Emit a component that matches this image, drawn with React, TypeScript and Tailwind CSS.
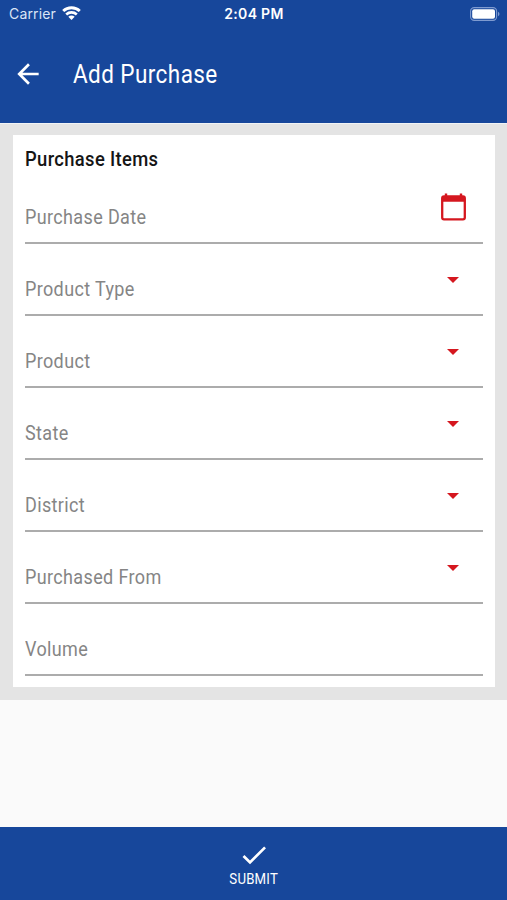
import React from "react";

type Field = { label: string; icon?: "calendar" | "caret" };

const fields: Field[] = [
  { label: "Purchase Date", icon: "calendar" },
  { label: "Product Type", icon: "caret" },
  { label: "Product", icon: "caret" },
  { label: "State", icon: "caret" },
  { label: "District", icon: "caret" },
  { label: "Purchased From", icon: "caret" },
  { label: "Volume" },
];

function StatusBar() {
  return (
    <div className="grid h-7 grid-cols-3 items-center pl-[9px] pr-[7px] font-['Inter',sans-serif] text-[14px] leading-7 text-white">
      <div className="flex items-center gap-[6px]">
        <span className="tracking-[0.15px] text-[#dbe5f6]">Carrier</span>
        <svg className="-mt-[2px]" width="19" height="14" viewBox="0 0 19 14" fill="none" stroke="white">
          <path d="M1.2 5C5.8.8 13.2.8 17.8 5" strokeWidth="3" />
          <path d="M4.2 8.4C7.2 5.7 11.8 5.7 14.8 8.4" strokeWidth="2.7" />
          <path d="M9.5 14 6.3 10.8C8.1 9.2 10.9 9.2 12.7 10.8Z" fill="white" stroke="none" />
        </svg>
      </div>
      <span className="-ml-px text-center font-semibold tracking-[0.3px]">2:04 PM</span>
      <svg className="-mt-px justify-self-end" width="30" height="14" viewBox="0 0 30 14">
        <rect x=".6" y=".6" width="26" height="12.8" rx="3.6" fill="none" stroke="#7f9bd0" strokeWidth="1.1" />
        <rect x="2.2" y="2.2" width="22.8" height="9.6" rx="2" fill="white" />
        <path d="M28 4.8c2 .8 2 3.6 0 4.4z" fill="#7f9bd0" />
      </svg>
    </div>
  );
}

function FieldRow({ label, icon }: Field) {
  return (
    <div className="flex h-[72px] items-end justify-between border-b-2 border-[#acacac] pb-[13px]">
      <span className="ml-[0.4px] origin-left scale-x-90 text-[20px] leading-6 tracking-[0.4px] text-[#858585]">{label}</span>
      {icon === "calendar" && (
        <svg className="mb-[8px] mr-[17px]" width="25" height="28" viewBox="0 0 25 28" fill="none" stroke="#d5171f">
          <rect x="1.2" y="3.4" width="22.6" height="22.9" rx="1.8" strokeWidth="2.3" />
          <path d="M1.2 8.8V5Q1.2 3 3.2 3H21.8Q23.8 3 23.8 5V8.8Z" fill="#d5171f" stroke="none" />
          <path d="M5 .4V4M20 .4V4" strokeWidth="2.4" />
        </svg>
      )}
      {icon === "caret" && (
        <svg className="mb-[18px] mr-[24px]" width="12" height="6" viewBox="0 0 12 6">
          <path d="M0 0h12L6 6z" fill="#d5171f" />
        </svg>
      )}
    </div>
  );
}

export default function App() {
  return (
    <div className="flex h-[900px] w-[507px] flex-col bg-[#fafafa] font-['Roboto',sans-serif]">
      <header className="h-[123px] bg-[#17479b]">
        <StatusBar />
        <div className="flex h-[92px] items-center pl-[12px] text-white">
          <svg width="32" height="32" viewBox="0 0 24 24" fill="currentColor">
            <path d="M20 11H7.83l5.59-5.59L12 4l-8 8 8 8 1.41-1.41L7.83 13H20v-2z" />
          </svg>
          <h1 className="ml-[29.4px] mt-px origin-left scale-x-90 text-[25px] leading-8 tracking-[0.47px]">Add Purchase</h1>
        </div>
      </header>
      <main className="h-[577px] border-t border-[#f1f3f5] bg-[#e4e4e4] pl-[13px] pr-[12px] pt-[11px]">
        <section className="h-[552px] bg-white px-3">
          <h2 className="ml-[0.4px] h-[37px] origin-left scale-x-92 pt-[12px] text-[20px] font-medium leading-6 tracking-[0.37px] text-[#151515]">Purchase Items</h2>
          {fields.map((field) => (
            <FieldRow key={field.label} {...field} />
          ))}
        </section>
      </main>
      <button className="mt-auto flex h-[73px] flex-col items-center bg-[#17479b] pt-[12px] text-white">
        <svg width="32" height="32" viewBox="0 0 24 24" fill="currentColor">
          <path d="M9 16.17 4.83 12l-1.42 1.41L9 19 21 7l-1.41-1.41z" />
        </svg>
        <span className="scale-x-88 text-[15px] leading-4 tracking-[0.25px]">SUBMIT</span>
      </button>
    </div>
  );
}
